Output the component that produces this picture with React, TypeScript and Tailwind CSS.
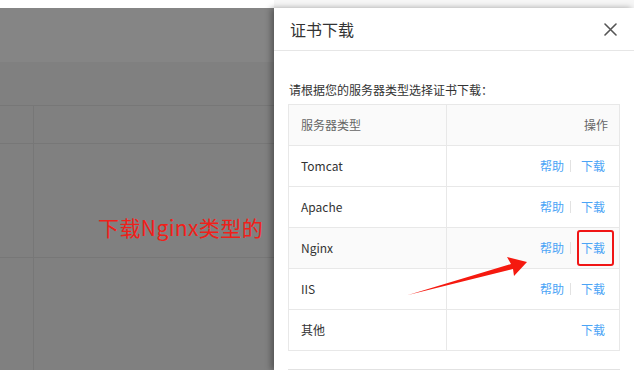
import React from "react";

const rows = [
  { name: "Tomcat", help: true },
  { name: "Apache", help: true },
  { name: "Nginx", help: true, hover: true },
  { name: "IIS", help: true },
  { name: "其他", help: false },
];

function Links({ help }: { help: boolean }) {
  return (
    <div className="flex items-center text-[12px] text-[#4ba4f6]">
      {help && (
        <>
          <span>帮助</span>
          <span className="inline-block w-px h-[12px] bg-[#e2e2e2] ml-[6px] mr-[10px]" />
        </>
      )}
      <span>下载</span>
    </div>
  );
}

export default function App() {
  return (
    <div
      className="relative w-[634px] h-[370px] overflow-hidden flex flex-col bg-white"
      style={{ fontFamily: '"Noto Sans CJK SC", "Noto Sans", sans-serif' }}
    >
      <div className="flex h-[8px]">
        <div className="flex-1 bg-white" />
        <div className="w-[360px] bg-[#f6f6f6]" />
      </div>
      <div className="flex flex-1 min-h-0">
        {/* overlay background */}
        <div className="flex-1 flex flex-col bg-[#808080]">
          <div className="h-[54px] bg-[#858585]" />
          <div className="h-[43px]" />
          <div className="flex h-[38px] border-t border-[#777777]">
            <div className="w-[34px] border-r border-[#777777]" />
            <div className="flex-1" />
          </div>
          <div className="flex h-[114px] border-t border-[#777777]">
            <div className="w-[34px] border-r border-[#777777]" />
            <div className="flex-1" />
          </div>
          <div className="flex flex-1 border-t border-[#777777]">
            <div className="w-[34px] border-r border-[#777777]" />
            <div className="flex-1" />
          </div>
        </div>
        {/* drawer */}
        <div className="w-[360px] bg-white flex flex-col shadow-[-3px_0_6px_rgba(0,0,0,0.35)] z-10">
          <div className="h-[43px] border-b border-[#e6e6e6] flex items-center justify-between pl-4 pr-4">
            <span className="text-[16px] text-[#333]">证书下载</span>
            <svg width="13" height="13" viewBox="0 0 13 13" className="mr-px">
              <path d="M1 1 L12 12 M12 1 L1 12" stroke="#555" strokeWidth="1.6" strokeLinecap="round" />
            </svg>
          </div>
          <div className="px-[14px] pt-[29px]">
            <div className="text-[12px] leading-[20px] text-[#333] mb-[4px] pl-px">
              请根据您的服务器类型选择证书下载：
            </div>
            <div className="border-t border-x border-[#e8e8e8]">
              <div className="flex h-[41px] border-b border-[#e8e8e8] bg-[#fafafa] text-[12px] text-[#666]">
                <div className="w-[158px] border-r border-[#e8e8e8] flex items-center pl-3">服务器类型</div>
                <div className="flex-1 flex items-center justify-end pr-[11px]">操作</div>
              </div>
              {rows.map((r) => (
                <div
                  key={r.name}
                  className={`flex h-[41px] border-b border-[#e8e8e8] text-[12px] text-[#333] ${r.hover ? "bg-[#fafafa]" : "bg-white"}`}
                >
                  <div className="w-[158px] border-r border-[#e8e8e8] flex items-center pl-3">{r.name}</div>
                  <div className="flex-1 flex items-center justify-end pr-[14px]">
                    <Links help={r.help} />
                  </div>
                </div>
              ))}
            </div>
            <div className="mt-[18px] border-t border-[#e2e2e2]" />
          </div>
        </div>
      </div>

      {/* annotations */}
      <div className="absolute left-[98px] top-[213px] text-[21px] leading-[28px] tracking-[0.4px] text-[#f0201a] z-20">
        下载Nginx类型的
      </div>
      <div className="absolute left-[577px] top-[230px] w-[37px] h-[36px] border-2 border-[#f01515] rounded-[3px] z-20" />
      <svg className="absolute left-0 top-0 z-20" width="634" height="370" viewBox="0 0 634 370">
        <polygon
          points="408,295 511,264 507,257 527,262 514,276 513,269"
          fill="#f5190f"
        />
      </svg>
    </div>
  );
}
